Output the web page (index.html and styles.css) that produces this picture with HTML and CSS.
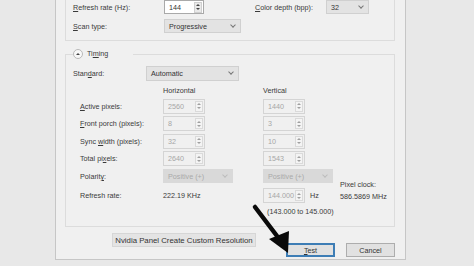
FILE: index.html
```html
<!DOCTYPE html>
<html>
<head>
<meta charset="utf-8">
<link rel="stylesheet" href="styles.css">
</head>
<body>
<div class="dialog">
  <div class="group top-group">
    <div class="row">
      <span class="lbl lbl-top"><u>R</u>efresh rate (Hz):</span>
      <div class="spin spin-on"><span class="val">144</span><span class="spinner"><i class="up"></i><i class="dn"></i></span></div>
      <span class="lbl lbl-color"><u>C</u>olor depth (bpp):</span>
      <div class="select select-depth"><span>32</span><i class="chev"></i></div>
    </div>
    <div class="row">
      <span class="lbl lbl-top"><u>S</u>can type:</span>
      <div class="select select-scan"><span>Progressive</span><i class="chev"></i></div>
    </div>
  </div>

  <fieldset class="timing">
    <legend><span class="toggle"><i></i></span>Ti<u>m</u>ing</legend>
    <div class="row std-row">
      <span class="lbl lbl-std">Stan<u>d</u>ard:</span>
      <div class="select select-std"><span>Automatic</span><i class="chev"></i></div>
    </div>
    <div class="tgrid">
      <span></span><span class="colhead">Horizontal</span><span class="colhead">Vertical</span><span></span>

      <span class="lbl"><u>A</u>ctive pixels:</span>
      <div class="spin"><span class="val">2560</span><span class="spinner"><i class="up"></i><i class="dn"></i></span></div>
      <div class="spin"><span class="val">1440</span><span class="spinner"><i class="up"></i><i class="dn"></i></span></div>
      <span></span>

      <span class="lbl"><u>F</u>ront porch (pixels):</span>
      <div class="spin"><span class="val">8</span><span class="spinner"><i class="up"></i><i class="dn"></i></span></div>
      <div class="spin"><span class="val">3</span><span class="spinner"><i class="up"></i><i class="dn"></i></span></div>
      <span></span>

      <span class="lbl">Sync <u>w</u>idth (pixels):</span>
      <div class="spin"><span class="val">32</span><span class="spinner"><i class="up"></i><i class="dn"></i></span></div>
      <div class="spin"><span class="val">10</span><span class="spinner"><i class="up"></i><i class="dn"></i></span></div>
      <span></span>

      <span class="lbl">Total pi<u>x</u>els:</span>
      <div class="spin"><span class="val">2640</span><span class="spinner"><i class="up"></i><i class="dn"></i></span></div>
      <div class="spin"><span class="val">1543</span><span class="spinner"><i class="up"></i><i class="dn"></i></span></div>
      <span></span>

      <span class="lbl">Polarit<u>y</u>:</span>
      <div class="select select-pol"><span>Positive (+)</span><i class="chev"></i></div>
      <div class="select select-pol"><span>Positive (+)</span><i class="chev"></i></div>
      <div class="pclock"><div>Pixel clock:</div><div>586.5869 MHz</div></div>

      <span class="lbl lbl-refresh">Refresh rate:</span>
      <span class="plain lbl-refresh">222.19 KHz</span>
      <div class="hzcell"><div class="spin spin-hz"><span class="val">144.000</span><span class="spinner"><i class="up"></i><i class="dn"></i></span></div><span class="hz">Hz</span></div>

      <span></span><span></span>
      <span class="range">(143.000 to 145.000)</span>
    </div>
  </fieldset>

  <div class="footer">
    <button class="btn btn-caption">Nvidia Panel Create Custom Resolution</button>
    <button class="btn btn-test"><u>T</u>est</button>
    <button class="btn btn-cancel">Cancel</button>
  </div>
</div>

<svg class="arrow" width="40" height="52" viewBox="0 0 40 52">
  <line x1="2" y1="2" x2="24" y2="31" stroke="#0a0a0a" stroke-width="4.5" stroke-linecap="round"/>
  <polygon points="16,34 36,26 35,48" fill="#0a0a0a"/>
</svg>
</body>
</html>
```

FILE: styles.css
```css
* { box-sizing: border-box; }

html, body {
  margin: 0;
  padding: 0;
}

body {
  width: 474px;
  height: 266px;
  overflow: hidden;
  background: #e8e8e8;
  font-family: "Liberation Sans", Arial, sans-serif;
  font-size: 7.2px;
  color: #3a3a3a;
  position: relative;
}

u { text-decoration: underline; text-underline-offset: 1px; }

.dialog {
  margin-left: 55px;
  width: 351px;
  height: 260px;
  background: #f0f0f0;
  border: 1px solid #c6c6c6;
  border-top: none;
  padding: 0 10px 0 9px;
  display: flex;
  flex-direction: column;
}

.group {
  border: 1px solid #dcdcdc;
  border-top: none;
  padding: 0 0 7px 7px;
  display: flex;
  flex-direction: column;
  gap: 5px;
}

.row {
  display: flex;
  align-items: center;
  height: 14px;
}

.lbl { white-space: nowrap; }
.lbl-top { width: 91px; }
.lbl-color { margin-left: 51px; width: 71px; }

.spin {
  display: flex;
  align-items: center;
  width: 42px;
  height: 15px;
  border: 1px solid #d4d4d4;
  background: #f0f0f0;
  color: #a6a6a6;
  padding: 0 1px 0 4px;
}
.spin .val { flex: 1; }
.spin-on {
  width: 40px;
  height: 14px;
  background: #fff;
  border-color: #a9a9a9;
  color: #333;
}

.spinner {
  width: 8px;
  height: 11px;
  border: 1px solid #dadada;
  background: #f4f4f4;
  display: flex;
  flex-direction: column;
  align-items: center;
  justify-content: center;
  gap: 2px;
}
.spin-on .spinner { border-color: #cfcfcf; background: #e9e9e9; }

.spinner i {
  width: 0;
  height: 0;
  border-left: 2px solid transparent;
  border-right: 2px solid transparent;
}
.spinner .up { border-bottom: 2px solid #a0a0a0; }
.spinner .dn { border-top: 2px solid #a0a0a0; }
.spin-on .spinner .up { border-bottom-color: #444; }
.spin-on .spinner .dn { border-top-color: #444; }

.select {
  display: flex;
  align-items: center;
  height: 14px;
  background: #e3e3e3;
  border: 1px solid #d0d0d0;
  padding: 0 5px 0 4px;
  color: #333;
}
.select span { flex: 1; white-space: nowrap; }
.chev {
  width: 4px;
  height: 4px;
  border-right: 1px solid #777;
  border-bottom: 1px solid #777;
  transform: rotate(45deg);
  margin-top: -3px;
}
.select-depth { width: 43px; }
.select-scan { width: 77px; }
.select-std { width: 93px; height: 15px; }
.select-pol {
  width: 70px;
  background: #d9d9d9;
  border-color: #d9d9d9;
  color: #a9a9a9;
}
.select-pol .chev { border-color: #bdbdbd; }

.timing {
  margin: 8px 0 0;
  padding: 0 0 7px 7px;
  border: 1px solid #dcdcdc;
  min-width: 0;
}
.timing legend {
  padding: 0 4px 0 0;
  margin-left: 0;
  line-height: 10px;
  height: 10px;
  display: flex;
  align-items: center;
  width: 60px;
  background: linear-gradient(to right, #f0f0f0 52px, transparent 52px);
}
.toggle {
  width: 10px;
  height: 10px;
  border-radius: 50%;
  border: 1px solid #b9b9b9;
  background: #f8f8f8;
  margin-right: 4px;
  display: flex;
  align-items: center;
  justify-content: center;
}
.toggle i {
  width: 0;
  height: 0;
  border-left: 2px solid transparent;
  border-right: 2px solid transparent;
  border-bottom: 2px solid #444;
}

.std-row { margin-top: 7px; height: 15px; }
.lbl-std { width: 73px; }

.tgrid {
  margin-left: 7px;
  margin-top: 5px;
  display: grid;
  grid-template-columns: 83px 100px 77px 52px;
  grid-template-rows: 10px repeat(5, 15px) 15px 15px;
  row-gap: 2.6px;
  align-items: center;
}
.tgrid > :nth-child(-n+4) { align-self: start; }
.colhead { color: #3a3a3a; }

.pclock {
  line-height: 12px;
  align-self: end;
  margin-bottom: -1px;
}
.tgrid > .pclock { grid-column: 4; grid-row: 6 / span 2; }

.lbl-refresh { margin-top: 3px; }
.hzcell { display: flex; align-items: center; margin-top: 3px; }
.spin-hz { width: 42px; }
.hz { margin-left: 5px; color: #3a3a3a; }
.range { margin-left: 4px; white-space: nowrap; margin-top: 0; }

.footer {
  margin-top: 6px;
  height: 24px;
  display: flex;
}
.btn {
  font-family: "Liberation Sans", Arial, sans-serif;
  font-size: 7.2px;
  color: #333;
  background: #e1e1e1;
  border: 1px solid #adadad;
  padding: 0;
  height: 14px;
}
.btn-caption {
  align-self: flex-start;
  margin-left: 47px;
  width: 144px;
  font-size: 7.8px;
  background: #e4e4e4;
  border-color: #d6d6d6;
}
.btn-test {
  align-self: flex-end;
  margin-left: auto;
  width: 49px;
  border: 2px solid #3d7db5;
}
.btn-cancel {
  align-self: flex-end;
  margin-left: 11px;
  width: 49px;
}

.arrow {
  position: absolute;
  left: 253px;
  top: 205px;
  overflow: visible;
}
```
